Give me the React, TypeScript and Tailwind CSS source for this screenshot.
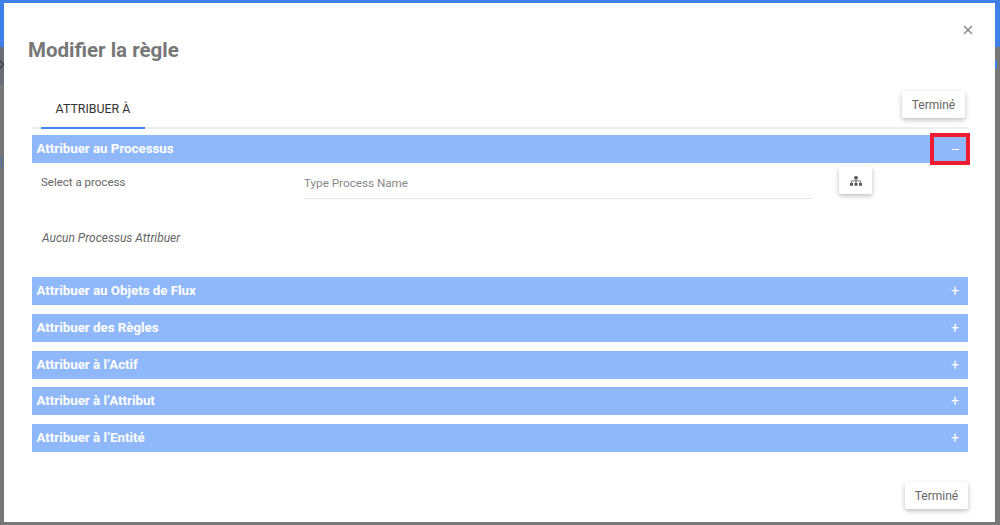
import { FaSitemap } from 'react-icons/fa'
import { X } from 'lucide-react'

const closedSections = [
  'Attribuer au Objets de Flux',
  'Attribuer des Règles',
  'Attribuer à l’Actif',
  'Attribuer à l’Attribut',
  'Attribuer à l’Entité',
]

function SectionBar({ title, children }: { title: string; children: React.ReactNode }) {
  return (
    <div className="flex h-7 items-center justify-between bg-[#8fb8fa] pl-[4.5px] pr-[9px] text-[13.3px] font-bold text-white">
      <span>{title}</span>
      {children}
    </div>
  )
}

function DoneButton() {
  return (
    <button className="h-[27px] w-[63px] rounded-[2px] bg-white text-xs text-[#666] shadow-[0_2px_5px_rgba(0,0,0,0.26)]">
      Terminé
    </button>
  )
}

export default function App() {
  return (
    <div className="relative h-[525px] w-[1000px] overflow-hidden bg-[#777] font-['Roboto',sans-serif]">
      {/* page behind the dialog */}
      <div className="absolute inset-x-0 top-0 h-[47px] bg-[#3f80e8]" />
      <div className="absolute left-0 top-[47px] h-[38px] w-[4px] bg-[#696d75]" />
      <div className="absolute left-[-4px] top-[61px] size-[7px] rotate-45 border-t border-r border-[#333]" />
      <div className="absolute left-[1px] top-[156px] h-[11px] w-[3px] rounded-l-[2px] border-y border-l border-[#3f6fb8]" />
      <div className="absolute left-[995px] top-[60px] h-[9px] w-[2px] rounded-r-[2px] bg-[#3f80e8]" />

      <div className="absolute left-[4px] top-[3px] flex h-[519px] w-[991px] flex-col bg-white pl-[28px] pr-[27px]">
        <button className="absolute right-[20px] top-[20px] text-[#888]">
          <X size={14} strokeWidth={2.5} />
        </button>

        <h1 className="mt-[34px] -ml-[4px] text-[20.5px] leading-[26px] font-bold text-[#777]">Modifier la règle</h1>

        {/* Tabs */}
        <div className="mt-[26px] flex h-[40px] items-start justify-between border-b-2 border-[#eee]">
          <div className="ml-[9px] flex h-[40px] w-[104px] items-center justify-center border-b-2 border-[#4285f4] pt-[2px] text-[12.4px] text-[#333]">
            ATTRIBUER À
          </div>
          <div className="mt-[2px] mr-[3px]">
            <DoneButton />
          </div>
        </div>

        <div className="mt-[6px] flex flex-col">
          <div className="relative">
            <SectionBar title="Attribuer au Processus">
              <span className="h-px w-[7px] bg-white" />
            </SectionBar>
            <div className="absolute right-[-2px] top-[-2px] h-[32px] w-[40px] border-4 border-[#ee1c2e]" />
          </div>

          {/* Process picker */}
          <div className="flex h-[114px] flex-col">
            <div className="flex items-start pl-[9px]">
              <span className="mt-[11px] w-[263px] text-[11.5px] text-[#666]">Select a process</span>
              <div className="mt-[6px] flex h-[30px] w-[508px] items-center border-b border-[#e5e5e5] pt-[10px] pb-[9px] text-[11.7px] text-[#888]">
                Type Process Name
              </div>
              <button className="mt-[4px] ml-[27px] flex h-[27px] w-[33px] items-center justify-center rounded-[2px] bg-white text-[#555] shadow-[0_2px_5px_rgba(0,0,0,0.26)]">
                <FaSitemap size={12} />
              </button>
            </div>
            <p className="mt-[31px] pl-[10px] text-xs text-[#666] italic">Aucun Processus Attribuer</p>
          </div>

          <div className="flex flex-col gap-[8.75px]">
            {closedSections.map((title) => (
              <SectionBar key={title} title={title}>
                <span className="text-sm leading-none font-normal">+</span>
              </SectionBar>
            ))}
          </div>
        </div>

        <div className="mt-[30px] flex justify-end">
          <DoneButton />
        </div>
      </div>
    </div>
  )
}
